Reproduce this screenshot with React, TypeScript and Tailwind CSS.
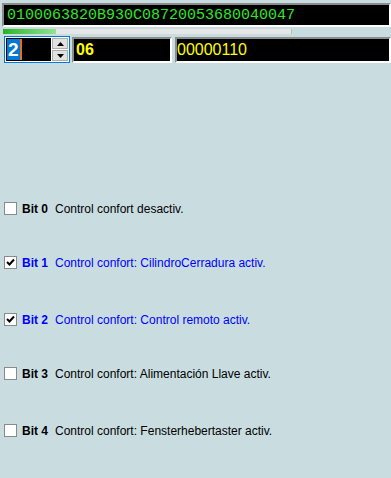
import React from 'react';

interface BitRowProps {
  bit: number;
  label: string;
  checked: boolean;
  className?: string;
}

const bits = [
  { bit: 0, label: 'Control confort desactiv.', checked: false, mt: 'mt-[139px]' },
  { bit: 1, label: 'Control confort: CilindroCerradura activ.', checked: true, mt: 'mt-[41px]' },
  { bit: 2, label: 'Control confort: Control remoto activ.', checked: true, mt: 'mt-[44px]' },
  { bit: 3, label: 'Control confort: Alimentación Llave activ.', checked: false, mt: 'mt-[41px]' },
  { bit: 4, label: 'Control confort: Fensterhebertaster activ.', checked: false, mt: 'mt-[44px]' },
];

const BitRow: React.FC<BitRowProps> = ({ bit, label, checked, className }) => {
  const color = checked ? 'text-[#0000ff]' : 'text-black';
  return (
    <div className={`flex items-center h-[13px] ${className}`}>
      <div className="ml-[4px] w-[13px] h-[13px] bg-white border border-[#8a8a8a] flex items-center justify-center">
        {checked && (
          <svg width="9" height="9" viewBox="0 0 9 9">
            <path d="M1 4 L3.5 6.5 L8 1.5" stroke="black" strokeWidth="2" fill="none" />
          </svg>
        )}
      </div>
      <span className={`ml-[5px] w-[33px] text-[12px] font-bold ${color}`}>Bit {bit}</span>
      <span className={`text-[12px] ${color}`}>{label}</span>
    </div>
  );
};

const App: React.FC = () => {
  return (
    <div
      className="w-[391px] h-[478px] bg-[#c9dde0] overflow-hidden flex flex-col"
      style={{ fontFamily: '"Liberation Sans", Arial, sans-serif' }}
    >
      {/* hex display */}
      <div className="mt-[3px] ml-[2px] h-[24px] border-2 border-t-[#8c8c8c] border-l-[#8c8c8c] border-r-white border-b-white bg-black flex items-center">
        <span
          className="ml-[3px] text-[15px] text-[#2ee82a] leading-none"
          style={{ fontFamily: '"Liberation Mono", monospace' }}
        >
          0100063820B930C08720053680040047
        </span>
      </div>

      {/* progress */}
      <div className="mt-[2px] ml-[3px] w-[289px] h-[5px] bg-[#e6e6e6] border-r border-[#bcbcbc]">
        <div className="w-[53px] h-full bg-gradient-to-r from-[#1fb51f] to-[#8fe58f]" />
      </div>

      {/* controls row */}
      <div className="mt-[2px] flex items-center h-[27px]">
        <div className="ml-[4px] w-[66px] h-[27px] border border-[#0078d7] bg-white flex p-[1px]">
          <div className="w-[45px] h-full bg-black flex items-center">
            <span className="ml-[1px] bg-[#0078d7] text-white font-bold text-[19px] leading-[21px] px-[1px]">2</span>
            <span className="w-[2px] h-[21px] bg-[#e8701a]" />
          </div>
          <div className="ml-[1px] flex flex-col w-[16px] h-full gap-[1px]">
            <div className="flex-1 bg-[#e1e1e1] border border-[#adadad] flex items-center justify-center">
              <svg width="7" height="4" viewBox="0 0 7 4"><path d="M3.5 0 L7 4 L0 4 Z" fill="black" /></svg>
            </div>
            <div className="flex-1 bg-[#e1e1e1] border border-[#adadad] flex items-center justify-center">
              <svg width="7" height="4" viewBox="0 0 7 4"><path d="M0 0 L7 0 L3.5 4 Z" fill="black" /></svg>
            </div>
          </div>
        </div>
        <div className="ml-[2px] w-[100px] h-[26px] border-2 border-[#8c8c8c] border-b-white border-r-white bg-black flex items-center">
          <span className="ml-[2px] text-[#ffff00] font-bold text-[16px]">06</span>
        </div>
        <div className="ml-[3px] flex-1 h-[26px] border-2 border-[#8c8c8c] border-b-white border-r-white bg-black flex items-center">
          <span className="text-[#ffff00] text-[16px]">00000110</span>
        </div>
      </div>

      {bits.map((b) => (
        <BitRow key={b.bit} bit={b.bit} label={b.label} checked={b.checked} className={b.mt} />
      ))}
    </div>
  );
};

export default App;
